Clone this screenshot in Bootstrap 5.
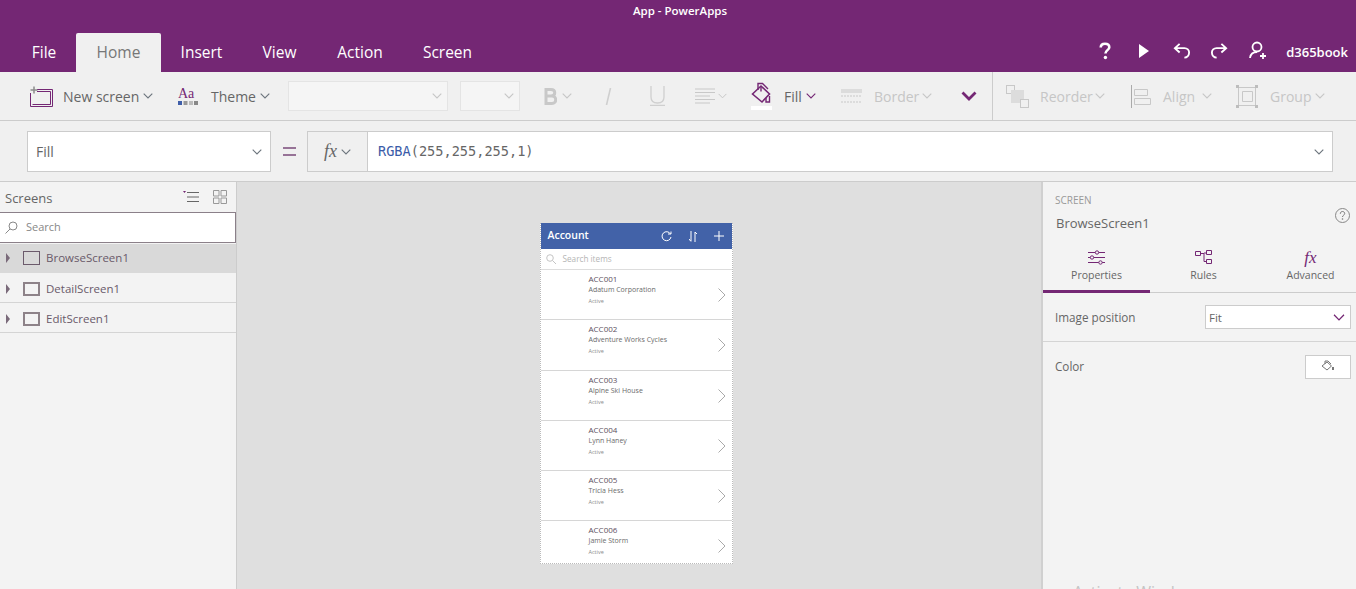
<!DOCTYPE html>
<html lang="en">
<head>
<meta charset="UTF-8">
<title>App - PowerApps</title>
<link href="https://cdn.jsdelivr.net/npm/bootstrap@5.3.0/dist/css/bootstrap.min.css" rel="stylesheet">
<style>
    html, body { height: 100%; }
    body {
        font-family: "Open Sans", "Liberation Sans", sans-serif;
        background: #f0f0f0;
        color: #666;
        overflow: hidden;
        font-size: 14px;
    }
    svg { display: block; flex: none; }

    /* title bar and tabs */
    .top-bar { background: #742774; height: 72px; color: #fff; }
    .app-title { height: 33px; line-height: 22px; font-size: 11.5px; font-weight: 600; text-align: center; padding-left: 4px; }
    .tab-row { height: 39px; padding-left: 12px; }
    .tab-row .nav-link {
        color: #fff; font-size: 15.5px; height: 39px; line-height: 39px; padding: 0; text-align: center;
    }
    .tab-row .nav-link.active { background: #f0f0f0; color: #777; border-radius: 2px 2px 0 0; }
    .w-file { width: 64px; }
    .w-home { width: 85px; }
    .w-insert { width: 81px; }
    .w-view { width: 75px; }
    .w-action { width: 86px; }
    .w-screen { width: 89px; }
    .top-tools { padding-right: 8px; gap: 0; }
    .top-tools svg { margin-bottom: 4px; }
    .user-name { font-size: 13px; font-weight: 600; margin-left: 18px; }

    /* ribbon */
    .ribbon { height: 49px; border-bottom: 1px solid #ccc; font-size: 14px; }
    .rib-item { display: flex; align-items: center; height: 48px; }
    .rib-off { color: #c6c6c6; }
    .rib-fake-select { background: #f5f5f5; border: 1px solid #e4e4e4; height: 30px; display: flex; align-items: center; justify-content: flex-end; padding-right: 5px; }
    .rib-divider { border-left: 1px solid #ccc; height: 48px; margin-left: 15px; margin-right: 13px; }
    .fill-icon { border-bottom: 4px solid #fff; padding-bottom: 1px; }
    .lab-new { width: 80px; margin-left: 10px; white-space: nowrap; }
    .lab-theme { width: 49px; margin-left: 12px; }
    .lab-fill { width: 22px; margin-left: 12px; }
    .lab-border { width: 48px; margin-left: 12px; }
    .lab-reorder { width: 55px; margin-left: 11px; }
    .lab-align { width: 39px; margin-left: 12px; }
    .lab-group { width: 45px; margin-left: 12px; }

    /* formula bar */
    .formula-bar { height: 61px; border-bottom: 1px solid #ccc; padding: 10px 23px 0 27px; align-items: flex-start; }
    .field-box { height: 41px; border: 1px solid #ccc; background: #fff; }
    .prop-box { width: 244px; padding: 0 8px; font-size: 14px; }
    .equal-sign { width: 36px; height: 41px; }
    .fx-box { width: 61px; height: 41px; border: 1px solid #ccc; background: #f0f0f0; gap: 4px; }
    .fx-text { font-family: "Liberation Serif", serif; font-style: italic; font-size: 18px; color: #666; }
    .formula-box { border-left: 0; padding: 0 8px 0 10px; }
    .formula-text { font-family: "DejaVu Sans Mono", monospace; font-size: 13.6px; color: #666; }
    .formula-fn { color: #3a5ba8; }

    /* main area */
    .work-area { height: 408px; }
    .left-pane { width: 237px; background: #f3f3f3; border-right: 1px solid #ccc; }
    .pane-head { height: 30px; padding: 3px 9px 0 5px; font-size: 13px; }
    .pane-head-tools { gap: 14px; margin-top: -3px; }
    .search-field { height: 31px; background: #fff; border: 1px solid #8b8089; border-left: 0; padding-left: 5px; gap: 8px; font-size: 11px; color: #888; }
    .screen-list .list-group-item {
        height: 30px; background: transparent; border: 0; border-bottom: 1px solid #d4d4d4; border-radius: 0;
        padding: 2px 0 0 6px; font-size: 11.5px; color: #6a5a6a;
    }
    .screen-list .list-group-item.active { background: #d9d9d9; border-bottom-color: #d9d9d9; color: #6a5a6a; margin-top: 1px; height: 29px; padding-top: 0; }

    .canvas-pane { background: #dfdfdf; padding: 41px 6px 0 0; }
    .phone { width: 193px; height: 341px; background: #fff; border: 1px dotted #bbb; border-top: 0; color: #6b6b6b; }
    .phone-head { height: 26px; background: #4262a8; color: #fff; font-size: 10.5px; font-weight: 600; padding: 0 8px 0 7px; }
    .phone-tools { gap: 17px; }
    .phone-search { height: 21px; padding-left: 5px; gap: 5px; font-size: 8.2px; color: #b5b5b5; border-bottom: 1px solid #ddd; }
    .phone-row { height: 50.3px; border-bottom: 1px solid #d6d6d6; padding: 3px 6px 0 48px; }
    .phone-row:last-child { border-bottom: 0; height: 43px; }
    .row-code { font-size: 8px; line-height: 11px; color: #5d4f5d; }
    .row-name { font-size: 7px; line-height: 11px; }
    .row-state { font-size: 5.5px; line-height: 11px; color: #8a8a8a; margin-top: 1px; }
    .row-arrow { margin-top: 15px; }

    .right-pane { width: 315px; background: #f3f3f3; border-left: 2px solid #d0d0d0; position: relative; overflow: hidden; }
    .pane-title { padding: 12px 6px 0 12px; height: 61px; }
    .screen-kicker { font-size: 10px; color: #999; line-height: 13px; }
    .screen-title { font-size: 13px; line-height: 20px; margin-top: 6px; margin-left: 1px; color: #666; }
    .help-mark { margin-top: 14px; }
    .side-tabs { height: 50px; border-bottom: 1px solid #ccc; }
    .side-tab { width: 107px; flex: none; height: 50px; font-size: 10.5px; padding-top: 7px; gap: 3px; color: #666; }
    .side-tab.side-on { border-bottom: 3px solid #742774; }
    .side-fx { font-family: "Liberation Serif", serif; font-style: italic; font-size: 17px; line-height: 15px; height: 15px; color: #742774; }
    .prop-row { height: 49px; border-bottom: 1px solid #d4d4d4; padding: 0 5px 0 12px; font-size: 11.7px; }
    .prop-label { padding-top: 1px; }
    .prop-select { width: 146px; height: 24px; background: #fff; border: 1px solid #ccc; padding: 0 5px 0 3px; font-size: 11.5px; }
    .color-btn { width: 46px; height: 24px; background: #fff; border: 1px solid #ccc; }
    .color-row { border-bottom: 0; }
    .win-mark { position: absolute; left: 30px; top: 398px; font-size: 16px; color: #c4c4c4; white-space: nowrap; }
</style>
</head>
<body>
<svg width="0" height="0" style="position:absolute">
    <symbol id="chev" viewBox="0 0 10 6"><path d="M.7.7 5 5 9.300.7" fill="none" stroke="currentColor" stroke-width="1.100"/></symbol>
</svg>

<div class="top-bar">
    <div class="app-title">App - PowerApps</div>
    <div class="d-flex justify-content-between tab-row">
        <nav class="nav">
            <a class="nav-link w-file" href="#">File</a>
            <a class="nav-link active w-home" href="#">Home</a>
            <a class="nav-link w-insert" href="#">Insert</a>
            <a class="nav-link w-view" href="#">View</a>
            <a class="nav-link w-action" href="#">Action</a>
            <a class="nav-link w-screen" href="#">Screen</a>
        </nav>
        <div class="d-flex align-items-center top-tools">
            <svg width="12" height="18" viewBox="0 0 14 20"><path d="M2 6c0-3 2-4.500 5-4.500S12 3 12 5.500c0 3.500-4.500 3.500-4.500 7.500" fill="none" stroke="#fff" stroke-width="3"/><circle cx="7.500" cy="17.500" r="2" fill="#fff"/></svg>
            <svg style="margin-left:27px" width="12" height="16" viewBox="0 0 12 16"><path d="M1 1v14l10-7z" fill="#fff"/></svg>
            <svg style="margin-left:23px" width="18" height="18" viewBox="0 0 19 18"><path d="M7 1.500 2 6l5 4.500M2 6h10c3 0 5 2 5 4.700S15 16 12 16" fill="none" stroke="#fff" stroke-width="2"/></svg>
            <svg style="margin-left:19px" width="18" height="18" viewBox="0 0 19 18"><path d="M12 1.500 17 6l-5 4.500M17 6H7c-3 0-5 2-5 4.700S4 16 7 16" fill="none" stroke="#fff" stroke-width="2"/></svg>
            <svg style="margin-left:21px" width="19" height="19" viewBox="0 0 19 19"><circle cx="8" cy="6" r="4.500" fill="none" stroke="#fff" stroke-width="1.800"/><path d="M1 17c.5-4 3-6 7-6M14 12v6M11 15h6" fill="none" stroke="#fff" stroke-width="1.800"/></svg>
            <span class="user-name">d365book</span>
        </div>
    </div>
</div>

<div class="d-flex ribbon">
    <div class="rib-item" style="margin-left:30px">
        <svg width="23" height="21" viewBox="0 0 23 21"><path d="M7 3.500h15.500v17H.5V7M2.500 18.500h18v-13H7" fill="none" stroke="#742774"/><path d="M4 .5v7M.5 4h7" stroke="#8a8a8a" stroke-width="1.500"/></svg>
        <span class="lab-new">New screen</span>
        <svg width="10" height="6" class="text-secondary"><use href="#chev"/></svg>
    </div>
    <div class="rib-item" style="margin-left:25px">
        <svg width="21" height="20" viewBox="0 0 21 20"><text x="0" y="12" font-family="Liberation Serif" font-size="14" fill="#742774">Aa</text><rect x="0" y="15" width="4" height="4" fill="#3f5ea9"/><rect x="5.500" y="15" width="4" height="4" fill="#999"/><rect x="11" y="15" width="4" height="4" fill="#bbb"/><rect x="16" y="15" width="4" height="4" fill="#888"/></svg>
        <span class="lab-theme">Theme</span>
        <svg width="10" height="6" class="text-secondary"><use href="#chev"/></svg>
    </div>
    <div class="rib-item" style="margin-left:18px"><div class="rib-fake-select rib-off" style="width:160px"><svg width="10" height="6"><use href="#chev"/></svg></div></div>
    <div class="rib-item rib-off" style="margin-left:12px"><div class="rib-fake-select" style="width:60px"><svg width="10" height="6"><use href="#chev"/></svg></div></div>
    <div class="rib-item rib-off" style="margin-left:24px;gap:5px">
        <svg width="13" height="17" viewBox="0 0 13 17"><path d="M2 1.500h5c5 0 5 6.500 0 6.500H2zM2 8h6c5 0 5 7.500 0 7.500H2z" fill="none" stroke="#c8c8c8" stroke-width="3"/></svg>
        <svg width="10" height="6"><use href="#chev"/></svg>
    </div>
    <div class="rib-item rib-off" style="margin-left:32px">
        <svg width="9" height="17" viewBox="0 0 9 17"><path d="M6.500 0 2.500 17" stroke="#cfcfcf" stroke-width="1.600"/></svg>
    </div>
    <div class="rib-item rib-off" style="margin-left:37px">
        <svg width="15" height="20" viewBox="0 0 15 20"><path d="M1 0v11c0 4 2 6 6.500 6s6.500-2 6.500-6V0M0 19.500h15" fill="none" stroke="#cfcfcf" stroke-width="1.300"/></svg>
    </div>
    <div class="rib-item rib-off" style="margin-left:30px;gap:3px">
        <svg width="20" height="17" viewBox="0 0 20 17"><path d="M0 1h20M0 4.500h20M0 8h15M0 11.500h20M0 15h15" stroke="#c8c8c8"/></svg>
        <svg width="9" height="6"><use href="#chev"/></svg>
    </div>
    <div class="rib-item" style="margin-left:24px;color:#742774">
        <div class="fill-icon">
            <svg width="21" height="23" viewBox="0 0 21 23"><path d="M1.500 12 10 4l8.500 8-7.500 8z" fill="none" stroke="#742774" stroke-width="1.600"/><path d="M7 8V1.500h4.500L17 7M10 9.500V5M18.500 14v6h-3.500v-4" fill="none" stroke="#742774" stroke-width="1.400"/></svg>
        </div>
        <span class="lab-fill" style="color:#666">Fill</span>
        <svg width="10" height="6"><use href="#chev"/></svg>
    </div>
    <div class="rib-item rib-off" style="margin-left:25px">
        <svg width="21" height="14" viewBox="0 0 21 14"><path d="M0 1h21M0 3h21" stroke="#c8c8c8"/><path d="M0 7h21M0 13h21" stroke="#c8c8c8" stroke-dasharray="2 1"/></svg>
        <span class="lab-border">Border</span>
        <svg width="10" height="6"><use href="#chev"/></svg>
    </div>
    <div class="rib-item" style="margin-left:29px">
        <svg width="16" height="10" viewBox="0 0 16 10"><path d="M1.500 1.500 8 8l6.500-6.500" fill="none" stroke="#742774" stroke-width="2.800"/></svg>
    </div>
    <div class="rib-divider"></div>
    <div class="rib-item rib-off">
        <svg width="23" height="23" viewBox="0 0 23 23"><rect x=".5" y=".5" width="8" height="8" fill="#f0f0f0" stroke="#c8c8c8"/><rect x="5" y="5" width="13" height="13" fill="#dcdcdc"/><rect x="14.500" y="14.500" width="8" height="8" fill="#f0f0f0" stroke="#c8c8c8"/></svg>
        <span class="lab-reorder">Reorder</span>
        <svg width="10" height="6"><use href="#chev"/></svg>
    </div>
    <div class="rib-item rib-off" style="margin-left:26px">
        <svg width="20" height="23" viewBox="0 0 20 23"><path d="M.5 0v23" stroke="#aaa"/><path d="M3.500 4.500h13v6h-13zM3.500 13.500h16v6h-16z" fill="none" stroke="#c8c8c8"/></svg>
        <span class="lab-align">Align</span>
        <svg width="10" height="6"><use href="#chev"/></svg>
    </div>
    <div class="rib-item rib-off" style="margin-left:24px">
        <svg width="22" height="23" viewBox="0 0 22 23"><path d="M2.500 3v17M19.500 3v17M3 2.500h16M3 20.500h16M6.500 6.500h10v10h-10z" fill="none" stroke="#c8c8c8"/><path d="M0 0h3v3H0zM19 0h3v3h-3zM0 20h3v3H0zM19 20h3v3h-3z" fill="#bdbdbd"/></svg>
        <span class="lab-group">Group</span>
        <svg width="10" height="6"><use href="#chev"/></svg>
    </div>
</div>

<div class="d-flex formula-bar">
    <div class="field-box prop-box d-flex align-items-center justify-content-between">
        <span>Fill</span>
        <svg width="10" height="6" class="text-secondary"><use href="#chev"/></svg>
    </div>
    <div class="equal-sign d-flex align-items-center justify-content-center">
        <svg width="13" height="9" viewBox="0 0 13 9"><path d="M0 1h13M0 8h13" stroke="#7a4a7a" stroke-width="1.600"/></svg>
    </div>
    <div class="fx-box d-flex align-items-center justify-content-center">
        <span class="fx-text">fx</span>
        <svg width="10" height="6" class="text-secondary"><use href="#chev"/></svg>
    </div>
    <div class="field-box formula-box flex-grow-1 d-flex align-items-center justify-content-between">
        <span class="formula-text"><span class="formula-fn">RGBA</span>(255,255,255,1)</span>
        <svg width="10" height="6" class="text-secondary"><use href="#chev"/></svg>
    </div>
</div>

<div class="d-flex work-area">
    <div class="left-pane">
        <div class="pane-head d-flex align-items-center justify-content-between">
            <span>Screens</span>
            <div class="d-flex align-items-center pane-head-tools">
                <svg width="16" height="12" viewBox="0 0 16 12"><path d="M4 1.500h12M4 6h12M4 10.500h12" stroke="#666"/><path d="M0 0h3L1.500 2z" fill="#742774"/></svg>
                <svg width="14" height="14" viewBox="0 0 14 14"><path d="M.5.500h5.500v5.500H.5zM8 .5h5.500v5.500H8zM.5 8h5.500v5.500H.5zM8 8h5.500v5.500H8z" fill="none" stroke="#999"/></svg>
            </div>
        </div>
        <div class="search-field d-flex align-items-center">
            <svg width="13" height="13" viewBox="0 0 13 13"><circle cx="8" cy="5" r="4" fill="none" stroke="#888"/><path d="M5 8 .5 12.500" stroke="#888"/></svg>
            <span>Search</span>
        </div>
        <div class="list-group screen-list">
            <div class="list-group-item active d-flex align-items-center">
                <svg width="4" height="10" viewBox="0 0 4 10"><path d="M0 0l4 5-4 5z" fill="#7a6a7a"/></svg>
                <svg style="margin-left:13px" width="17" height="14" viewBox="0 0 17 14"><rect x=".5" y=".5" width="16" height="13" fill="none" stroke="#6b5a6b"/></svg>
                <span style="margin-left:6px">BrowseScreen1</span>
            </div>
            <div class="list-group-item d-flex align-items-center">
                <svg width="4" height="10" viewBox="0 0 4 10"><path d="M0 0l4 5-4 5z" fill="#7a6a7a"/></svg>
                <svg style="margin-left:13px" width="17" height="14" viewBox="0 0 17 14"><rect x="1" y="1" width="15" height="12" fill="none" stroke="#8d8288" stroke-width="2"/></svg>
                <span style="margin-left:6px">DetailScreen1</span>
            </div>
            <div class="list-group-item d-flex align-items-center">
                <svg width="4" height="10" viewBox="0 0 4 10"><path d="M0 0l4 5-4 5z" fill="#7a6a7a"/></svg>
                <svg style="margin-left:13px" width="17" height="14" viewBox="0 0 17 14"><rect x="1" y="1" width="15" height="12" fill="none" stroke="#8d8288" stroke-width="2"/></svg>
                <span style="margin-left:6px">EditScreen1</span>
            </div>
        </div>
    </div>

    <div class="canvas-pane flex-grow-1 d-flex justify-content-center">
        <div class="phone">
            <div class="phone-head d-flex align-items-center justify-content-between">
                <span>Account</span>
                <div class="d-flex align-items-center phone-tools">
                    <svg width="11" height="11" viewBox="0 0 11 11"><path d="M9.500 3A4.500 4.500 0 1 0 10 6M7 3h3V.5" fill="none" stroke="#fff"/></svg>
                    <svg width="8" height="11" viewBox="0 0 8 11"><path d="M2 0v10M0 8l2 2.500M6 11V1M6 1l2 2" fill="none" stroke="#fff"/></svg>
                    <svg width="10" height="10" viewBox="0 0 10 10"><path d="M5 0v10M0 5h10" stroke="#fff"/></svg>
                </div>
            </div>
            <div class="phone-search d-flex align-items-center">
                <svg width="10" height="10" viewBox="0 0 10 10"><circle cx="4" cy="4" r="3.300" fill="none" stroke="#c4c4c4"/><path d="M6.500 6.500 10 10" stroke="#c4c4c4"/></svg>
                <span style="margin-left:2px">Search items</span>
            </div>
            <div class="phone-row d-flex justify-content-between">
                <div><div class="row-code">ACC001</div><div class="row-name">Adatum Corporation</div><div class="row-state">Active</div></div>
                <svg class="row-arrow" width="8" height="14" viewBox="0 0 8 14"><path d="M.5.500 7 7 .5 13.500" fill="none" stroke="#aaa"/></svg>
            </div>
            <div class="phone-row d-flex justify-content-between">
                <div><div class="row-code">ACC002</div><div class="row-name">Adventure Works Cycles</div><div class="row-state">Active</div></div>
                <svg class="row-arrow" width="8" height="14" viewBox="0 0 8 14"><path d="M.5.500 7 7 .5 13.500" fill="none" stroke="#aaa"/></svg>
            </div>
            <div class="phone-row d-flex justify-content-between">
                <div><div class="row-code">ACC003</div><div class="row-name">Alpine Ski House</div><div class="row-state">Active</div></div>
                <svg class="row-arrow" width="8" height="14" viewBox="0 0 8 14"><path d="M.5.500 7 7 .5 13.500" fill="none" stroke="#aaa"/></svg>
            </div>
            <div class="phone-row d-flex justify-content-between">
                <div><div class="row-code">ACC004</div><div class="row-name">Lynn Haney</div><div class="row-state">Active</div></div>
                <svg class="row-arrow" width="8" height="14" viewBox="0 0 8 14"><path d="M.5.500 7 7 .5 13.500" fill="none" stroke="#aaa"/></svg>
            </div>
            <div class="phone-row d-flex justify-content-between">
                <div><div class="row-code">ACC005</div><div class="row-name">Tricia Hess</div><div class="row-state">Active</div></div>
                <svg class="row-arrow" width="8" height="14" viewBox="0 0 8 14"><path d="M.5.500 7 7 .5 13.500" fill="none" stroke="#aaa"/></svg>
            </div>
            <div class="phone-row d-flex justify-content-between">
                <div><div class="row-code">ACC006</div><div class="row-name">Jamie Storm</div><div class="row-state">Active</div></div>
                <svg class="row-arrow" width="8" height="14" viewBox="0 0 8 14"><path d="M.5.500 7 7 .5 13.500" fill="none" stroke="#aaa"/></svg>
            </div>
        </div>
    </div>

    <div class="right-pane">
        <div class="pane-title d-flex justify-content-between">
            <div>
                <div class="screen-kicker">SCREEN</div>
                <div class="screen-title">BrowseScreen1</div>
            </div>
            <svg class="help-mark" width="15" height="15" viewBox="0 0 15 15"><circle cx="7.500" cy="7.500" r="7" fill="none" stroke="#888"/><path d="M5.300 5.800c0-1.500 1-2.300 2.200-2.300s2.200.8 2.200 2c0 1.700-2.200 1.700-2.200 3.500" fill="none" stroke="#777"/><circle cx="7.500" cy="11" r=".8" fill="#777"/></svg>
        </div>
        <div class="side-tabs d-flex">
            <div class="side-tab side-on d-flex flex-column align-items-center">
                <svg width="17" height="15" viewBox="0 0 17 15"><path d="M0 2.500h17M0 7.500h17M0 12.500h17" stroke="#742774"/><circle cx="9" cy="2.500" r="1.700" fill="#f3f3f3" stroke="#742774"/><circle cx="4" cy="7.500" r="1.700" fill="#f3f3f3" stroke="#742774"/><circle cx="12.500" cy="12.500" r="1.700" fill="#f3f3f3" stroke="#742774"/></svg>
                <span>Properties</span>
            </div>
            <div class="side-tab d-flex flex-column align-items-center">
                <svg width="17" height="15" viewBox="0 0 17 15"><path d="M.5 1.500h5v4h-5zM11.500.5h5v4h-5zM11.500 9.500h5v4h-5zM5.500 3.500h3.500v8h2.500M9 3h2.500" fill="none" stroke="#742774"/></svg>
                <span>Rules</span>
            </div>
            <div class="side-tab d-flex flex-column align-items-center">
                <span class="side-fx">fx</span>
                <span>Advanced</span>
            </div>
        </div>
        <div class="prop-row d-flex align-items-center justify-content-between">
            <span class="prop-label">Image position</span>
            <div class="prop-select d-flex align-items-center justify-content-between">
                <span class="prop-label">Fit</span>
                <svg width="12" height="7" viewBox="0 0 10 6" style="color:#742774"><use href="#chev"/></svg>
            </div>
        </div>
        <div class="prop-row color-row d-flex align-items-center justify-content-between">
            <span class="prop-label">Color</span>
            <div class="color-btn d-flex flex-column align-items-center">
                <svg style="margin-top:4px" width="14" height="11" viewBox="0 0 14 11"><path d="M1 6 6 2l4.500 4L6 10zM4 4V1h3l3 3" fill="none" stroke="#777"/><path d="M12 7v3" stroke="#777" stroke-width="2"/></svg>
            </div>
        </div>
        <div class="win-mark">Activate Windows</div>
    </div>
</div>

<script src="https://cdn.jsdelivr.net/npm/bootstrap@5.3.0/dist/js/bootstrap.bundle.min.js"></script>
</body>
</html>
